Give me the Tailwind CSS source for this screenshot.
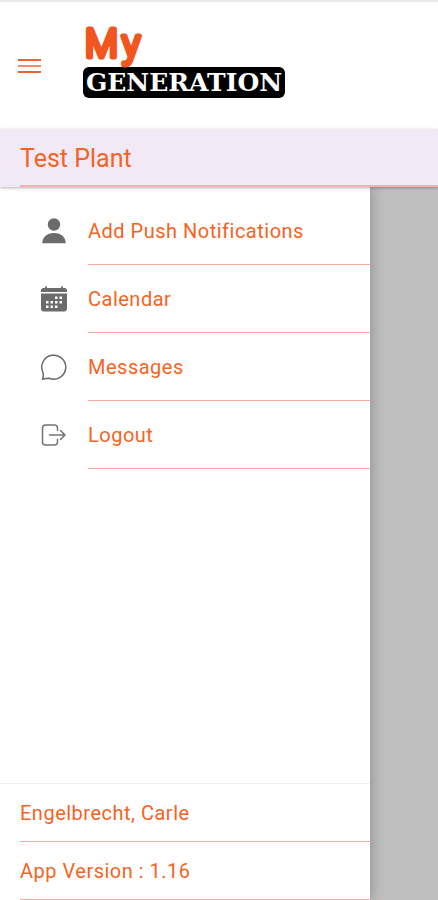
<!DOCTYPE html>
<html lang="en">
<head>
<meta charset="utf-8">
<meta name="viewport" content="width=device-width, initial-scale=1">
<title>My Generation</title>
<script src="https://cdn.jsdelivr.net/npm/@tailwindcss/browser@4"></script>
</head>
<body class="flex min-h-screen flex-col bg-white font-[Roboto,sans-serif] text-xl tracking-wide text-[#f5631f]">
<header class="flex h-[129px] shrink-0 items-center border-t-2 border-[#e9e9e9] pl-[18px]">
  <button type="button" aria-label="Menu" class="flex w-[23px] flex-col gap-1">
    <span class="h-0.5 bg-[#f2622f]"></span>
    <span class="h-0.5 bg-[#f58a63]"></span>
    <span class="h-0.5 bg-[#f2622f]"></span>
  </button>
  <a href="#" class="ml-[42px] flex flex-col pb-4" aria-label="My Generation">
    <svg class="relative z-10 -mb-1 h-[54px] w-[70px] overflow-visible" viewBox="0 -8 70 54">
      <text y="32" font-family="Roboto" font-size="38" font-weight="300" letter-spacing="0" fill="#f1561f" stroke="#f1561f" stroke-width="5" stroke-linejoin="round"><tspan x="2">M</tspan><tspan x="39">y</tspan></text>
    </svg>
    <span class="flex h-[31px] w-[202px] items-center justify-center rounded-md bg-black font-['DejaVu_Serif',serif] text-[25px] leading-none font-bold tracking-normal text-white">GENERATION</span>
  </a>
</header>
<section class="relative z-20 h-[58px] shrink-0 bg-[#f2e9f7] pl-5 shadow-[0_1px_3px_rgba(0,0,0,0.3)]">
  <h1 class="flex h-full items-center border-b-2 border-[#f0b3b3] pt-0.5 text-[25px] tracking-normal">Test Plant</h1>
</section>
<main class="flex flex-1 bg-[#bfbfbf]">
  <div class="flex flex-1 flex-col bg-white shadow-[0_0_14px_rgba(0,0,0,0.3)]">
    <nav class="flex-1 pt-[10px]">
      <a href="#" class="flex h-17 items-center pl-10">
        <svg class="mr-5 size-7" viewBox="0 0 28 28" fill="#6b6b6b"><circle cx="14" cy="7.5" r="6.2"/><path d="M2.3 26.3c0-6 4.3-10.3 11.7-10.3s11.7 4.300 11.7 10.300z"/></svg>
        <span class="flex h-full flex-1 items-center border-b border-[#f9a9a0]">Add Push Notifications</span>
      </a>
      <a href="#" class="flex h-17 items-center pl-10">
        <svg class="mr-5 size-7" viewBox="0 0 28 28" fill="#6b6b6b"><path d="M1 7V5.500Q1 3 3.500 3H5V1.500h2V3h14V1.500h2V3h1.500Q27 3 27 5.500V7z"/><path d="M1 8.500h26V23.500q0 3-3 3H4q-3 0-3-3z"/><path fill="#fff" d="M15 11.500h2.500v2.500h-2.500zM19.500 11.500h2.500v2.500h-2.500zM6 16h2.500v2.500H6zM10.500 16h2.500v2.500h-2.500zM15 16h2.500v2.500h-2.500zM19.500 16h2.500v2.500h-2.500zM6 20.500h2.500V23H6zM10.500 20.500h2.500V23h-2.500zM15 20.500h2.500V23h-2.500z"/></svg>
        <span class="flex h-full flex-1 items-center border-b border-[#f9a9a0]">Calendar</span>
      </a>
      <a href="#" class="flex h-17 items-center pl-10">
        <svg class="mr-5 size-7" viewBox="0 0 28 28" fill="none" stroke="#686868" stroke-width="1.500" stroke-linejoin="round"><path d="M2.500 26.200Q3.800 23 3 19.500A12 12 0 1 1 9 25.200Q5.500 25.200 2.500 26.200z"/></svg>
        <span class="flex h-full flex-1 items-center border-b border-[#f9a9a0]">Messages</span>
      </a>
      <a href="#" class="flex h-17 items-center pl-10">
        <svg class="mr-5 size-7" viewBox="0 0 28 28" fill="none" stroke="#747474" stroke-width="1.500" stroke-linecap="round" stroke-linejoin="round"><path d="M17.500 9.500V7q0-3-3-3H5.500q-3 0-3 3v14q0 3 3 3h9q3 0 3-3v-2.500M9.500 14H25M20.500 9.500L25 14l-4.500 4.500"/></svg>
        <span class="flex h-full flex-1 items-center border-b border-[#f9a9a0]">Logout</span>
      </a>
    </nav>
    <footer class="border-t border-[#f0f0f0] pl-5">
      <p class="flex h-[58px] items-center border-b border-[#f9a9a0]">Engelbrecht, Carle</p>
      <p class="flex h-[58px] items-center border-b border-[#f9a9a0]">App Version : 1.16</p>
    </footer>
  </div>
  <div class="w-17 shrink-0"></div>
</main>
</body>
</html>
